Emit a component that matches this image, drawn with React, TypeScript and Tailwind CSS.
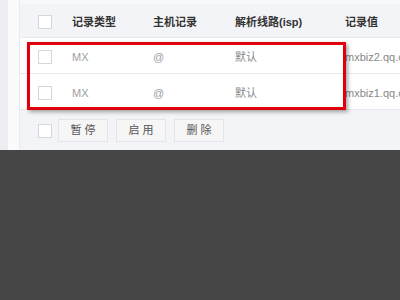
import React from "react";

const font = { fontFamily: '"Liberation Sans", "Noto Sans CJK SC", sans-serif' };

function Box() {
  return <div className="w-[14px] h-[14px] border border-[#d4d6da] bg-white shrink-0" />;
}

function Row({ v }: { v: string }) {
  return (
    <div className="h-[36px] flex items-center pt-[3px] bg-white border-b border-[#e8e9ec] text-[11px] text-[#a0a0a0]">
      <div className="w-[52px] pl-[18px] shrink-0"><Box /></div>
      <div className="w-[81px] shrink-0">MX</div>
      <div className="w-[82px] shrink-0">@</div>
      <div className="w-[110px] shrink-0 text-[#888]">默认</div>
      <div className="whitespace-nowrap text-[#888]">{v}</div>
    </div>
  );
}

function Btn({ t }: { t: string }) {
  return (
    <div className="w-[50px] h-[23px] flex items-center justify-center bg-[#f6f6f7] border border-[#e4e5e8] text-[11px] text-[#555] tracking-[3px] pl-[3px]">
      {t}
    </div>
  );
}

export default function App() {
  return (
    <div className="w-[400px] h-[300px] flex flex-col overflow-hidden" style={font}>
      <div className="h-[150px] flex">
        <div className="w-[8px] bg-[#eceef2]" />
        <div className="w-[12px] bg-[#fbfbfc] border-r border-[#e9eaee]" />
        <div className="flex-1 bg-[#f3f4f7] relative overflow-hidden">
          <div className="h-[4px] bg-[#f7f8fa]" />
          <div className="h-[34px] flex items-center pt-[3px] text-[11px] font-bold text-[#333] border-b border-[#e8e9ec]">
            <div className="w-[52px] pl-[18px] shrink-0"><Box /></div>
            <div className="w-[81px] shrink-0">记录类型</div>
            <div className="w-[82px] shrink-0">主机记录</div>
            <div className="w-[110px] shrink-0">解析线路(isp)</div>
            <div className="whitespace-nowrap">记录值</div>
          </div>
          <Row v="mxbiz2.qq.com" />
          <Row v="mxbiz1.qq.com" />
          <div className="flex items-center gap-[6px] pl-[18px] pt-[9px]">
            <Box />
            <div className="flex gap-[8px]">
              <Btn t="暂停" />
              <Btn t="启用" />
              <Btn t="删除" />
            </div>
          </div>
          <div className="absolute left-[7px] top-[42px] w-[319px] h-[68px] border-[3px] border-[#e0000b] shadow-[2px_2px_4px_rgba(0,0,0,0.35)]" />
        </div>
      </div>
      <div className="flex-1 bg-[#464646]" />
    </div>
  );
}
